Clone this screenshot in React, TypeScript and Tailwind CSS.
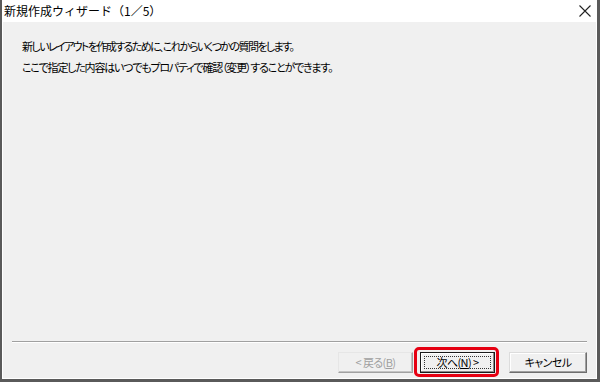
const jp = "font-['Noto_Sans_CJK_JP','Noto_Sans',sans-serif]";

function WinButton({
  children,
  disabled,
  focused,
  wide,
}: {
  children: React.ReactNode;
  disabled?: boolean;
  focused?: boolean;
  wide?: boolean;
}) {
  return (
    <div
      className={
        "relative flex h-[21px] items-center justify-center border bg-[#f0f0f0] text-[11px] tracking-[-0.6px] [font-feature-settings:'palt'] " +
        (wide ? "w-[78px] " : "w-[75px] ") +
        (focused
          ? "border-[#1a1a1a] shadow-[inset_-1px_-1px_0_#8a8a8a,inset_1px_1px_0_#ffffff] text-black"
          : disabled
            ? "border-t-[#e6e6e6] border-l-[#e6e6e6] border-r-[#a0a0a0] border-b-[#a0a0a0] shadow-[inset_-1px_-1px_0_#c4c4c4] text-[#a0a0a0]"
            : "border-t-[#dcdcdc] border-l-[#dcdcdc] border-r-[#6e6e6e] border-b-[#6e6e6e] shadow-[inset_-1px_-1px_0_#a0a0a0,inset_1px_1px_0_#ffffff] text-black")
      }
    >
      {focused ? (
        <span className="pointer-events-none absolute inset-[3px] border border-dotted border-[#333]" />
      ) : null}
      <span className="relative whitespace-pre leading-none">{children}</span>
    </div>
  );
}

export default function App() {
  return (
    <div
      className={`flex h-[382px] w-[600px] flex-col border-b-[3px] border-l-2 border-r-[3px] border-[#5a5a5a] bg-white ${jp}`}
    >
      <div className="flex h-[22px] shrink-0 items-center justify-between">
        <span className="pl-[2px] text-[12px] leading-none text-black">新規作成ウィザード（1／5）</span>
        <svg className="mr-[6px]" width="12" height="12" viewBox="0 0 12 12">
          <path d="M0.5 0.5 L11.5 11.5 M11.5 0.5 L0.5 11.5" stroke="#222" strokeWidth="1.1" />
        </svg>
      </div>

      <div className="mx-px mb-px flex flex-1 flex-col bg-[#f0f0f0]">
        <div className="pl-[19px] pt-[14px] text-[11px] leading-[21px] text-black [font-feature-settings:'palt']">
          <p className="tracking-[-1.6px]">新しいレイアウトを作成するために、これからいくつかの質問をします。</p>
          <p className="tracking-[-1.2px]">ここで指定した内容はいつでもプロパティで確認（変更）することができます。</p>
        </div>

        <div className="flex-1" />

        <div className="mx-[9px] border-t border-b border-t-[#a0a0a0] border-b-white" />

        <div className="flex items-center justify-end pb-[5px] pr-[9px] pt-[9px]">
          <WinButton disabled>
            {"< 戻る("}
            <span className="underline">B</span>)
          </WinButton>
          <div className="relative ml-[7px]">
            <WinButton focused>
              次へ(<span className="underline">N</span>
              {") >"}
            </WinButton>
            <span className="pointer-events-none absolute -bottom-[4px] -left-[6px] -right-[4px] -top-[5px] rounded-[5px] border-[3px] border-[#e60012]" />
          </div>
          <div className="ml-[14px]">
            <WinButton wide>キャンセル</WinButton>
          </div>
        </div>
      </div>
    </div>
  );
}
